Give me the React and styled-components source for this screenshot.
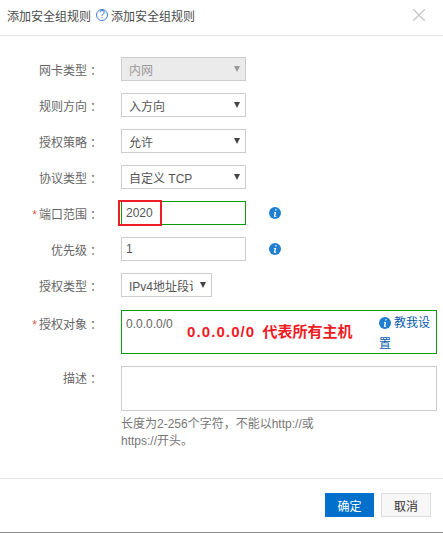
import React from 'react';
import styled, { createGlobalStyle } from 'styled-components';

const GlobalStyle = createGlobalStyle`
  html, body {
    margin: 0;
    padding: 0;
    background: #fff;
  }
  body {
    font-family: "Liberation Sans", "Noto Sans CJK SC", sans-serif;
    font-size: 12px;
    color: #555;
  }
  * {
    box-sizing: border-box;
  }
`;

const Dialog = styled.div`
  width: 443px;
  height: 533px;
  display: flex;
  flex-direction: column;
  border-bottom: 1px solid #8c8c8c;
  overflow: hidden;
`;

const Header = styled.div`
  height: 36px;
  flex: none;
  display: flex;
  align-items: center;
  padding: 0 18px 5px 7px;
  border-bottom: 1px solid #e5e5e5;
  font-size: 12px;
  color: #4a4a4a;
`;

const HelpIcon = styled.span`
  width: 12px;
  height: 12px;
  margin: 0 3px 0 5px;
  border: 1px solid #3f7fd0;
  border-radius: 50%;
  color: #3f7fd0;
  font-size: 10px;
  line-height: 10px;
  text-align: center;
`;

const Close = styled.svg`
  width: 12px;
  height: 12px;
  margin-left: auto;
  stroke: #c9c9c9;
  stroke-width: 1.4;
`;

const Form = styled.div`
  flex: 1;
  padding-top: 21px;
  display: flex;
  flex-direction: column;
`;

const Row = styled.div`
  display: flex;
  align-items: flex-start;
  margin-bottom: ${(p) => p.$gap ?? 12}px;
`;

const Label = styled.div`
  width: 121px;
  flex: none;
  padding: ${(p) => p.$top ?? 7}px 31px 0 0;
  text-align: right;
  line-height: 14px;
  color: #666;
`;

const Star = styled.span`
  color: #e0534a;
  margin-right: 2px;
`;

const Colon = styled.span`
  display: inline-block;
  width: 0;
  margin-left: 3px;
  white-space: nowrap;
`;

const Select = styled.div`
  position: relative;
  width: ${(p) => p.$width ?? 125}px;
  height: 24px;
  padding: 1px 0 0 7px;
  display: flex;
  align-items: center;
  border: 1px solid #ccc;
  background: ${(p) => (p.$disabled ? '#ebebeb' : '#fff')};
  color: ${(p) => (p.$disabled ? '#999' : '#555')};
  overflow: hidden;
  white-space: nowrap;
`;

const SelectText = styled.span`
  flex: 1;
  min-width: 0;
  overflow: hidden;
`;

const Arrow = styled.span`
  flex: none;
  width: 0;
  height: 0;
  margin: 0 ${(p) => p.$right ?? 5}px 2px 7px;
  border-left: 3px solid transparent;
  border-right: 3px solid transparent;
  border-top: 6px solid ${(p) => (p.$disabled ? '#999' : '#444')};
`;

const Input = styled.div`
  width: 125px;
  height: 24px;
  padding: 0 4px;
  display: flex;
  align-items: center;
  border: 1px solid ${(p) => (p.$valid ? '#0a9a0a' : '#ccc')};
  color: #555;
`;

const InfoIcon = styled.svg`
  width: 12px;
  height: 12px;
  flex: none;
`;

const InfoSlot = styled.span`
  margin: 6px 0 0 23px;
  display: flex;
`;

const PortField = styled.div`
  position: relative;
`;

const RedBox = styled.div`
  position: absolute;
  left: -3px;
  top: -1px;
  width: 44px;
  height: 26px;
  border: 2px solid #ee1c25;
`;

const TargetBox = styled.div`
  position: relative;
  width: 316px;
  height: 44px;
  padding: 6px 0 0 4px;
  border: 1px solid #0a9a0a;
  line-height: 14px;
  color: #666;
`;

const Note = styled.div`
  position: absolute;
  left: 65px;
  top: 12px;
  font-size: 15px;
  font-weight: 700;
  line-height: 18px;
  color: #ee1c25;
  white-space: nowrap;
`;

const NoteAddress = styled.span`
  letter-spacing: 1.1px;
  margin-right: 3px;
`;

const HelpLink = styled.a`
  position: absolute;
  left: 257px;
  top: 2px;
  width: 56px;
  line-height: 21px;
  color: #0a5cad;
  font-size: 12px;
`;

const LinkIcon = styled(InfoIcon)`
  vertical-align: -2px;
  margin-right: 3px;
`;

const Textarea = styled.div`
  width: 316px;
  height: 45px;
  border: 1px solid #ccc;
`;

const Hint = styled.div`
  width: 200px;
  margin-top: 5px;
  line-height: 17px;
  color: #777;
`;

const Footer = styled.div`
  height: 54px;
  flex: none;
  display: flex;
  justify-content: flex-end;
  gap: 7px;
  padding: 14px 12px 0 0;
  border-top: 1px solid #e5e5e5;
`;

const Button = styled.button`
  width: ${(p) => (p.$primary ? 49 : 50)}px;
  height: 24px;
  padding: 0;
  font: inherit;
  border: 1px solid ${(p) => (p.$primary ? '#0070cc' : '#ddd')};
  background: ${(p) => (p.$primary ? '#0070cc' : '#f7f7f7')};
  color: ${(p) => (p.$primary ? '#fff' : '#333')};
`;

const Info = ({ as: Icon = InfoIcon }) => (
  <Icon viewBox="0 0 12 12">
    <circle cx="6" cy="6" r="6" fill="#1f7fd0" />
    <path d="M6.3 2.2h1.4l-.3 1.3H6zM5 5h2.2L6.4 9h.9l-.2.8H4.8L5.6 5.8H4.8z" fill="#fff" />
  </Icon>
);

const FieldLabel = ({ children, required, top }) => (
  <Label $top={top}>
    {required && <Star>*</Star>}
    {children}
    <Colon>：</Colon>
  </Label>
);

const Dropdown = ({ children, width, disabled, arrowRight }) => (
  <Select $width={width} $disabled={disabled}>
    <SelectText>{children}</SelectText>
    <Arrow $disabled={disabled} $right={arrowRight} />
  </Select>
);

export default function App() {
  return (
    <Dialog>
      <GlobalStyle />
      <Header>
        添加安全组规则
        <HelpIcon>?</HelpIcon>
        添加安全组规则
        <Close viewBox="0 0 12 12">
          <path d="M0 0 12 12M12 0 0 12" />
        </Close>
      </Header>
      <Form>
        <Row>
          <FieldLabel>网卡类型</FieldLabel>
          <Dropdown disabled>内网</Dropdown>
        </Row>
        <Row>
          <FieldLabel>规则方向</FieldLabel>
          <Dropdown>入方向</Dropdown>
        </Row>
        <Row>
          <FieldLabel>授权策略</FieldLabel>
          <Dropdown>允许</Dropdown>
        </Row>
        <Row>
          <FieldLabel>协议类型</FieldLabel>
          <Dropdown>自定义 TCP</Dropdown>
        </Row>
        <Row>
          <FieldLabel required>端口范围</FieldLabel>
          <PortField>
            <Input $valid>2020</Input>
            <RedBox />
          </PortField>
          <InfoSlot>
            <Info />
          </InfoSlot>
        </Row>
        <Row>
          <FieldLabel>优先级</FieldLabel>
          <Input>1</Input>
          <InfoSlot>
            <Info />
          </InfoSlot>
        </Row>
        <Row $gap={13}>
          <FieldLabel>授权类型</FieldLabel>
          <Dropdown width={91} arrowRight={5}>IPv4地址段访问</Dropdown>
        </Row>
        <Row $gap={12}>
          <FieldLabel required top={8}>授权对象</FieldLabel>
          <TargetBox>
            0.0.0.0/0
            <Note>
              <NoteAddress>0.0.0.0/0</NoteAddress> 代表所有主机
            </Note>
            <HelpLink>
              <Info as={LinkIcon} />
              教我设置
            </HelpLink>
          </TargetBox>
        </Row>
        <Row $gap={0}>
          <FieldLabel top={6}>描述</FieldLabel>
          <div>
            <Textarea />
            <Hint>长度为2-256个字符，不能以http://或https://开头。</Hint>
          </div>
        </Row>
      </Form>
      <Footer>
        <Button $primary>确定</Button>
        <Button>取消</Button>
      </Footer>
    </Dialog>
  );
}
